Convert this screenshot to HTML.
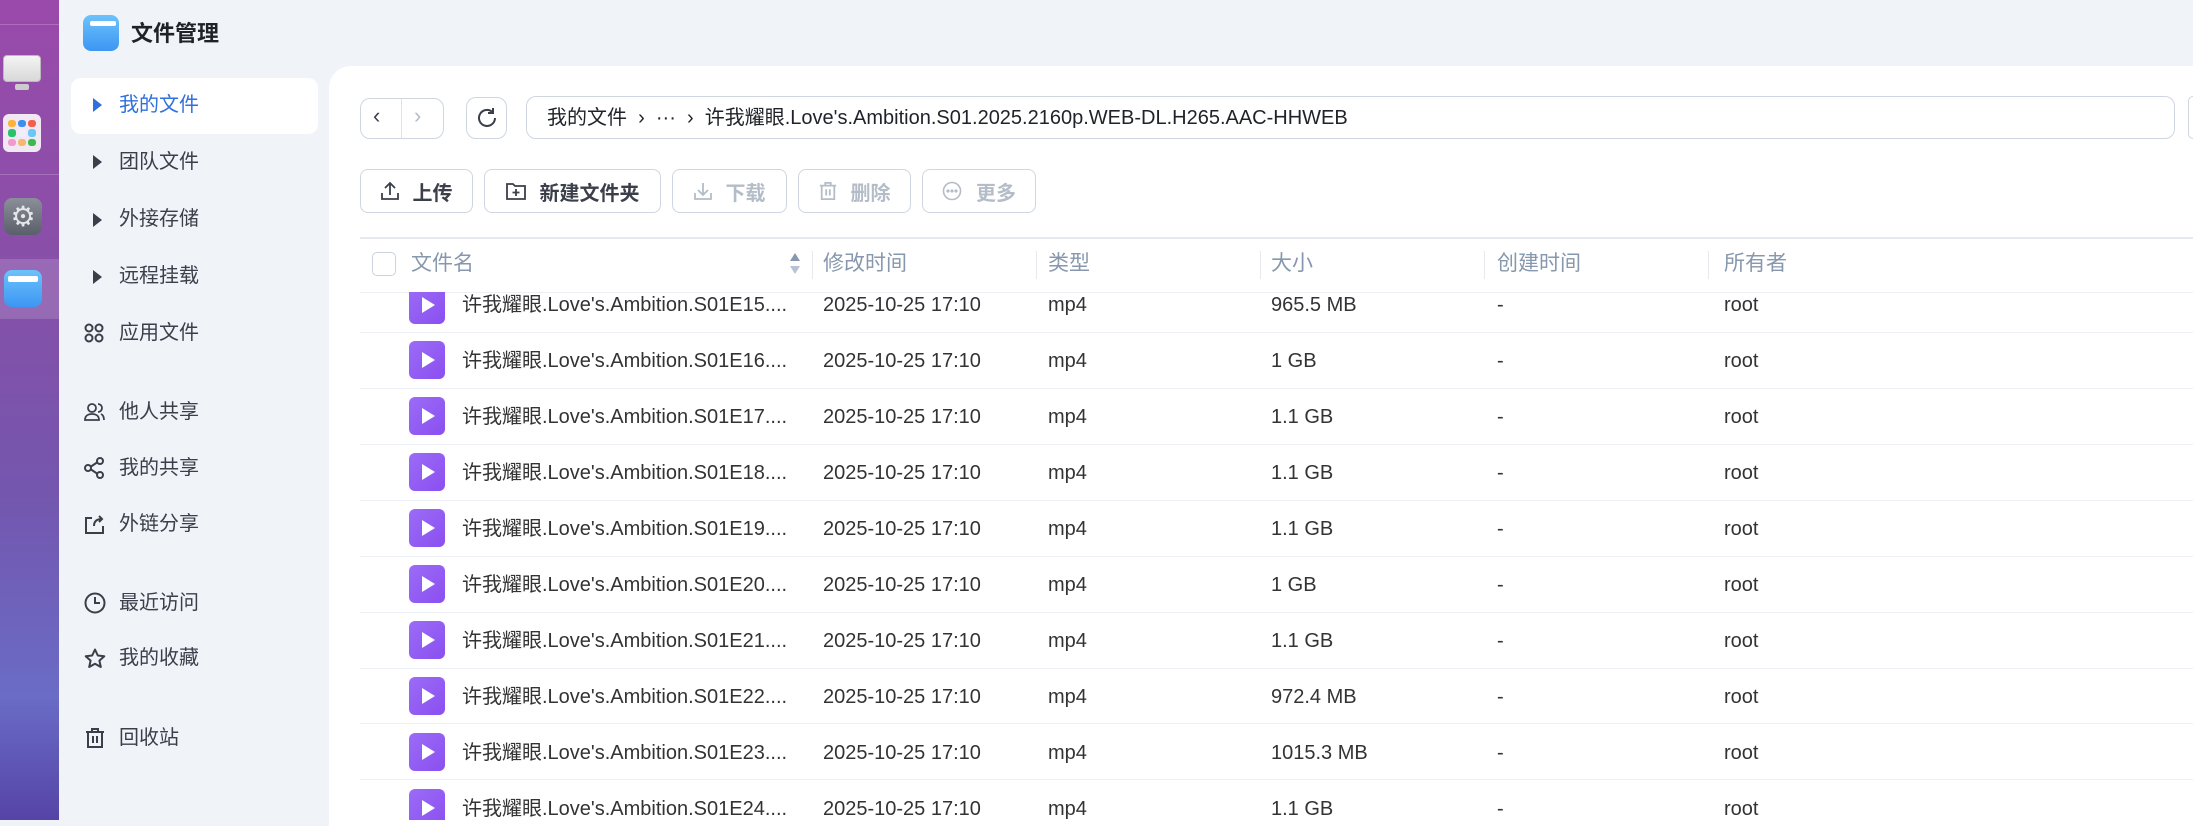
<!DOCTYPE html>
<html><head><meta charset="utf-8"><style>
*{margin:0;padding:0;box-sizing:border-box}
body{width:2193px;height:820px;overflow:hidden;background:#f0f3f8;font-family:"Liberation Sans","Noto Sans CJK SC",sans-serif;position:relative;color:#333}
.a{position:absolute}
.dock{left:0;top:0;width:59px;height:820px;background:linear-gradient(180deg,#9a4aab 0%,#8650a8 35%,#7456ae 60%,#6a6cc6 85%,#5544a6 100%)}
.nav{font-size:20px;color:#3a3f4a;white-space:nowrap;line-height:28px}
.btn{border:1.5px solid #cfd6e0;border-radius:8px;background:#fff;height:44px;top:169px;font-size:20px;font-weight:bold;display:flex;align-items:center;justify-content:center;gap:14px;color:#3a3f4a}
.dis{color:#b4bcc8}
.hd{top:250px;font-size:21px;color:#8797ad;line-height:28px}
.sep{top:251px;width:1px;height:28px;background:#e6eaf0}
.row{left:360px;width:1833px;height:1px;background:#eceff3}
.c{font-size:20px;white-space:nowrap;line-height:28px}
.ic{width:36px;height:38px;border-radius:6px;background:linear-gradient(135deg,#9b6cf7,#8b4ff0);}
.ic:after{content:"";position:absolute;left:13px;top:11px;border-left:13px solid #fff;border-top:8px solid transparent;border-bottom:8px solid transparent}
</style></head><body>
<div class="a dock"></div>
<div class="a" style="left:0;top:24px;width:59px;height:1px;background:rgba(255,255,255,.2)"></div>
<div class="a" style="left:0;top:174px;width:59px;height:1px;background:rgba(255,255,255,.2)"></div>
<div class="a" style="left:0;top:259px;width:59px;height:60px;background:rgba(255,255,255,.15)"></div>
<div class="a" style="left:3px;top:55px;width:38px;height:27px;border-radius:4px;background:linear-gradient(#f4f4f4,#d8d8d8);border:1px solid #bbb"></div>
<div class="a" style="left:15px;top:84px;width:14px;height:6px;background:#ccc;border-radius:2px"></div>
<div class="a" style="left:3px;top:114px;width:38px;height:38px;border-radius:6px;background:#f2e8f3;display:grid;grid-template-columns:repeat(3,8px);gap:2px;padding:6px 5px">
<i style="background:#fdb23a;border-radius:3px"></i><i style="background:#3a8ff0;border-radius:3px"></i><i style="background:#f2604a;border-radius:3px"></i><i style="background:#27c26a;border-radius:3px"></i><i style="background:#eef;border-radius:3px"></i><i style="background:#6ac8f7;border-radius:3px"></i><i style="background:#f29ad0;border-radius:3px"></i><i style="background:#f6b770;border-radius:3px"></i><i style="background:#3bbb4e;border-radius:3px"></i></div>
<div class="a" style="left:4px;top:198px;width:38px;height:37px;border-radius:8px;background:linear-gradient(#8a8f99,#5a5f6a);color:#e4e6ea;font-size:28px;line-height:37px;text-align:center">⚙</div>
<div class="a" style="left:4px;top:270px;width:38px;height:37px;border-radius:8px;background:linear-gradient(#6cc3fb,#3d96f2)"></div>
<div class="a" style="left:8px;top:276px;width:30px;height:6px;border-radius:2px;background:#fff"></div>
<div class="a" style="left:83px;top:15px;width:36px;height:36px;border-radius:8px;background:linear-gradient(#6cc3fb,#3d96f2)"></div>
<div class="a" style="left:90px;top:21px;width:26px;height:5px;border-radius:2px;background:#fff"></div>
<div class="a" style="left:131px;top:20px;font-size:22px;font-weight:bold;color:#1f2329;line-height:28px">文件管理</div>
<div class="a" style="left:71px;top:78px;width:247px;height:56px;background:#fff;border-radius:10px"></div>
<div class="a" style="left:93px;top:98px;border-left:9px solid #2f6fde;border-top:7px solid transparent;border-bottom:7px solid transparent"></div>
<div class="a nav" style="left:119px;top:91px;color:#2f6fde">我的文件</div>
<div class="a" style="left:93px;top:155px;border-left:9px solid #3a3f4a;border-top:7px solid transparent;border-bottom:7px solid transparent"></div>
<div class="a nav" style="left:119px;top:148px">团队文件</div>
<div class="a" style="left:93px;top:213px;border-left:9px solid #3a3f4a;border-top:7px solid transparent;border-bottom:7px solid transparent"></div>
<div class="a nav" style="left:119px;top:205px">外接存储</div>
<div class="a" style="left:93px;top:270px;border-left:9px solid #3a3f4a;border-top:7px solid transparent;border-bottom:7px solid transparent"></div>
<div class="a nav" style="left:119px;top:262px">远程挂载</div>
<svg class="a" style="left:84px;top:323px" width="21" height="21" viewBox="0 0 21 21" fill="none" stroke="#3a3f4a" stroke-width="2"><circle cx="5" cy="5" r="3.5"/><circle cx="15" cy="5" r="3.5"/><circle cx="5" cy="15" r="3.5"/><circle cx="15" cy="15" r="3.5"/></svg>
<div class="a nav" style="left:119px;top:319px">应用文件</div>
<svg class="a" style="left:84px;top:402px" width="21" height="20" viewBox="0 0 21 20" fill="none" stroke="#3a3f4a" stroke-width="1.8"><circle cx="8" cy="6" r="4"/><path d="M1 18c0-4 3-6 7-6s7 2 7 6zM14 2a4 4 0 010 8M17 12c2 1 3 3 3 6"/></svg>
<div class="a nav" style="left:119px;top:398px">他人共享</div>
<svg class="a" style="left:84px;top:457px" width="21" height="22" viewBox="0 0 21 22" fill="none" stroke="#3a3f4a" stroke-width="2"><circle cx="16" cy="4" r="3"/><circle cx="4" cy="11" r="3"/><circle cx="16" cy="18" r="3"/><path d="M7 9.5l6-4M7 12.5l6 4"/></svg>
<div class="a nav" style="left:119px;top:454px">我的共享</div>
<svg class="a" style="left:84px;top:514px" width="21" height="20" viewBox="0 0 21 20" fill="none" stroke="#3a3f4a" stroke-width="2"><path d="M8 4H2v15h17v-7M10 12c0-5 3-7 8-7M15 2l3 3-3 3"/></svg>
<div class="a nav" style="left:119px;top:510px">外链分享</div>
<svg class="a" style="left:84px;top:592px" width="22" height="22" viewBox="0 0 22 22" fill="none" stroke="#3a3f4a" stroke-width="2"><circle cx="11" cy="11" r="9.5"/><path d="M11 5v6h5"/></svg>
<div class="a nav" style="left:119px;top:589px">最近访问</div>
<svg class="a" style="left:84px;top:648px" width="22" height="22" viewBox="0 0 22 22" fill="none" stroke="#3a3f4a" stroke-width="2" stroke-linejoin="round"><path d="M11 1.5l2.8 6 6.5.7-4.9 4.4 1.4 6.4L11 15.7 5.2 19l1.4-6.4L1.7 8.2l6.5-.7z"/></svg>
<div class="a nav" style="left:119px;top:644px">我的收藏</div>
<svg class="a" style="left:85px;top:727px" width="20" height="22" viewBox="0 0 20 22" fill="none" stroke="#3a3f4a" stroke-width="2"><path d="M1 5h18M7 5V2h6v3M3 5v15h14V5M8 9v7M12 9v7"/></svg>
<div class="a nav" style="left:119px;top:724px">回收站</div>
<div class="a" style="left:329px;top:66px;width:1870px;height:760px;background:#fff;border-top-left-radius:22px"></div>
<div class="a" style="left:360px;top:98px;width:84px;height:41px;border:1.5px solid #cfd6e0;border-radius:10px"></div>
<div class="a" style="left:401px;top:99px;width:1px;height:39px;background:#dde3ea"></div>
<div class="a" style="left:373px;top:103px;font-size:22px;color:#3a3f4a">‹</div>
<div class="a" style="left:414px;top:103px;font-size:22px;color:#b4bcc8">›</div>
<div class="a" style="left:466px;top:97px;width:41px;height:42px;border:1.5px solid #cfd6e0;border-radius:10px"></div>
<svg class="a" style="left:476px;top:107px" width="22" height="22" viewBox="0 0 22 22" fill="none" stroke="#3a3f4a" stroke-width="2"><path d="M19 11a8 8 0 11-3-6.3"/><path d="M17 1v5h-5"/></svg>
<div class="a" style="left:526px;top:96px;width:1649px;height:43px;border:1.5px solid #cfd6e0;border-radius:10px"></div>
<div class="a" style="left:2188px;top:96px;width:10px;height:43px;border:1.5px solid #cfd6e0;border-radius:8px"></div>
<div class="a c" style="left:547px;top:104px;color:#1f2329">我的文件 &nbsp;›&nbsp; ··· &nbsp;›&nbsp; 许我耀眼.Love's.Ambition.S01.2025.2160p.WEB-DL.H265.AAC-HHWEB</div>
<div class="a btn" style="left:360px;width:113px"><svg width="18" height="20" viewBox="0 0 18 20" fill="none" stroke="#3a3f4a" stroke-width="1.8"><path d="M9 14V2M4 7l5-5 5 5M1 12v6h16v-6"/></svg>上传</div>
<div class="a btn" style="left:484px;width:177px"><svg width="20" height="18" viewBox="0 0 20 18" fill="none" stroke="#3a3f4a" stroke-width="1.8"><path d="M1 2h6l2 2h10v13H1zM10 7v7M6.5 10.5h7"/></svg>新建文件夹</div>
<div class="a btn dis" style="left:672px;width:115px"><svg width="18" height="20" viewBox="0 0 18 20" fill="none" stroke="#b4bcc8" stroke-width="1.8"><path d="M9 2v12M4 9l5 5 5-5M1 12v6h16v-6"/></svg>下载</div>
<div class="a btn dis" style="left:798px;width:113px"><svg width="18" height="20" viewBox="0 0 20 22" fill="none" stroke="#b4bcc8" stroke-width="2"><path d="M1 5h18M7 5V2h6v3M3 5v15h14V5M8 9v7M12 9v7"/></svg>删除</div>
<div class="a btn dis" style="left:922px;width:114px"><svg width="20" height="20" viewBox="0 0 20 20" fill="none" stroke="#b4bcc8" stroke-width="1.6"><circle cx="10" cy="10" r="8.5"/><circle cx="6" cy="10" r=".8"/><circle cx="10" cy="10" r=".8"/><circle cx="14" cy="10" r=".8"/></svg>更多</div>
<div class="a" style="left:360px;top:237px;width:1833px;height:1.5px;background:#e6eaf0"></div>
<div class="a" style="left:372px;top:252px;width:24px;height:24px;border:1.5px solid #ccd3dc;border-radius:5px;background:#fff"></div>
<div class="a hd" style="left:411px">文件名</div>
<div class="a" style="left:790px;top:253px;border-bottom:8px solid #8797ad;border-left:5px solid transparent;border-right:5px solid transparent"></div>
<div class="a" style="left:790px;top:266px;border-top:8px solid #b8c2d0;border-left:5px solid transparent;border-right:5px solid transparent"></div>
<div class="a sep" style="left:812px"></div><div class="a hd" style="left:823px">修改时间</div>
<div class="a sep" style="left:1036px"></div><div class="a hd" style="left:1048px">类型</div>
<div class="a sep" style="left:1260px"></div><div class="a hd" style="left:1271px">大小</div>
<div class="a sep" style="left:1484px"></div><div class="a hd" style="left:1497px">创建时间</div>
<div class="a sep" style="left:1708px"></div><div class="a hd" style="left:1724px">所有者</div>
<div class="a" style="left:360px;top:292px;width:1833px;height:528px;overflow:hidden">
<div class="a row" style="left:0;top:0"></div>
<div class="a row" style="left:0;top:40px"></div>
<div class="a row" style="left:0;top:96px"></div>
<div class="a row" style="left:0;top:152px"></div>
<div class="a row" style="left:0;top:208px"></div>
<div class="a row" style="left:0;top:264px"></div>
<div class="a row" style="left:0;top:320px"></div>
<div class="a row" style="left:0;top:376px"></div>
<div class="a row" style="left:0;top:431px"></div>
<div class="a row" style="left:0;top:487px"></div>
<div class="a ic" style="left:49px;top:-6px"></div><div class="a c" style="left:102px;top:-1px">许我耀眼.Love's.Ambition.S01E15....</div><div class="a c" style="left:463px;top:-1px">2025-10-25 17:10</div><div class="a c" style="left:688px;top:-1px">mp4</div><div class="a c" style="left:911px;top:-1px">965.5 MB</div><div class="a c" style="left:1137px;top:-1px">-</div><div class="a c" style="left:1364px;top:-1px">root</div>
<div class="a ic" style="left:49px;top:49px"></div><div class="a c" style="left:102px;top:55px">许我耀眼.Love's.Ambition.S01E16....</div><div class="a c" style="left:463px;top:55px">2025-10-25 17:10</div><div class="a c" style="left:688px;top:55px">mp4</div><div class="a c" style="left:911px;top:55px">1 GB</div><div class="a c" style="left:1137px;top:55px">-</div><div class="a c" style="left:1364px;top:55px">root</div>
<div class="a ic" style="left:49px;top:105px"></div><div class="a c" style="left:102px;top:111px">许我耀眼.Love's.Ambition.S01E17....</div><div class="a c" style="left:463px;top:111px">2025-10-25 17:10</div><div class="a c" style="left:688px;top:111px">mp4</div><div class="a c" style="left:911px;top:111px">1.1 GB</div><div class="a c" style="left:1137px;top:111px">-</div><div class="a c" style="left:1364px;top:111px">root</div>
<div class="a ic" style="left:49px;top:161px"></div><div class="a c" style="left:102px;top:167px">许我耀眼.Love's.Ambition.S01E18....</div><div class="a c" style="left:463px;top:167px">2025-10-25 17:10</div><div class="a c" style="left:688px;top:167px">mp4</div><div class="a c" style="left:911px;top:167px">1.1 GB</div><div class="a c" style="left:1137px;top:167px">-</div><div class="a c" style="left:1364px;top:167px">root</div>
<div class="a ic" style="left:49px;top:217px"></div><div class="a c" style="left:102px;top:223px">许我耀眼.Love's.Ambition.S01E19....</div><div class="a c" style="left:463px;top:223px">2025-10-25 17:10</div><div class="a c" style="left:688px;top:223px">mp4</div><div class="a c" style="left:911px;top:223px">1.1 GB</div><div class="a c" style="left:1137px;top:223px">-</div><div class="a c" style="left:1364px;top:223px">root</div>
<div class="a ic" style="left:49px;top:273px"></div><div class="a c" style="left:102px;top:279px">许我耀眼.Love's.Ambition.S01E20....</div><div class="a c" style="left:463px;top:279px">2025-10-25 17:10</div><div class="a c" style="left:688px;top:279px">mp4</div><div class="a c" style="left:911px;top:279px">1 GB</div><div class="a c" style="left:1137px;top:279px">-</div><div class="a c" style="left:1364px;top:279px">root</div>
<div class="a ic" style="left:49px;top:329px"></div><div class="a c" style="left:102px;top:335px">许我耀眼.Love's.Ambition.S01E21....</div><div class="a c" style="left:463px;top:335px">2025-10-25 17:10</div><div class="a c" style="left:688px;top:335px">mp4</div><div class="a c" style="left:911px;top:335px">1.1 GB</div><div class="a c" style="left:1137px;top:335px">-</div><div class="a c" style="left:1364px;top:335px">root</div>
<div class="a ic" style="left:49px;top:385px"></div><div class="a c" style="left:102px;top:391px">许我耀眼.Love's.Ambition.S01E22....</div><div class="a c" style="left:463px;top:391px">2025-10-25 17:10</div><div class="a c" style="left:688px;top:391px">mp4</div><div class="a c" style="left:911px;top:391px">972.4 MB</div><div class="a c" style="left:1137px;top:391px">-</div><div class="a c" style="left:1364px;top:391px">root</div>
<div class="a ic" style="left:49px;top:441px"></div><div class="a c" style="left:102px;top:447px">许我耀眼.Love's.Ambition.S01E23....</div><div class="a c" style="left:463px;top:447px">2025-10-25 17:10</div><div class="a c" style="left:688px;top:447px">mp4</div><div class="a c" style="left:911px;top:447px">1015.3 MB</div><div class="a c" style="left:1137px;top:447px">-</div><div class="a c" style="left:1364px;top:447px">root</div>
<div class="a ic" style="left:49px;top:497px"></div><div class="a c" style="left:102px;top:503px">许我耀眼.Love's.Ambition.S01E24....</div><div class="a c" style="left:463px;top:503px">2025-10-25 17:10</div><div class="a c" style="left:688px;top:503px">mp4</div><div class="a c" style="left:911px;top:503px">1.1 GB</div><div class="a c" style="left:1137px;top:503px">-</div><div class="a c" style="left:1364px;top:503px">root</div>
</div>
</body></html>
